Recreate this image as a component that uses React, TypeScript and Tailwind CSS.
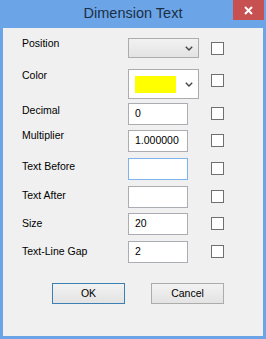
import React from "react";

type Row = {
  label: string;
  labelClass: string;
  rowClass: string;
  value?: string;
  focused?: boolean;
};

const rows: Row[] = [
  { label: "Decimal", labelClass: "mt-[1px]", rowClass: "mt-[4px]", value: "0" },
  { label: "Multiplier", labelClass: "mt-[-1px]", rowClass: "mt-[5px]", value: "1.000000" },
  { label: "Text Before", labelClass: "mt-[2px]", rowClass: "mt-[6px]", focused: true },
  { label: "Text After", labelClass: "mt-[3px]", rowClass: "mt-[6px]" },
  { label: "Size", labelClass: "mt-[4px]", rowClass: "mt-[5px]", value: "20" },
  { label: "Text-Line Gap", labelClass: "mt-[4px]", rowClass: "mt-[6px]", value: "2" },
];

function Chevron() {
  return (
    <svg width="8" height="5" viewBox="0 0 8 5" className="shrink-0">
      <polyline points="0.8,0.8 4,4 7.2,0.8" fill="none" stroke="#444" strokeWidth="1.4" />
    </svg>
  );
}

function Check({ className }: { className: string }) {
  return <div className={`w-[13px] h-[13px] border border-[#707070] bg-white ${className}`} />;
}

export default function App() {
  return (
    <div className="w-[266px] h-[339px] bg-[#6ba5e8] flex flex-col font-['Liberation_Sans',Arial,sans-serif] text-[10.5px] text-black">
      <div className="relative h-[28px] flex items-start justify-center pt-[4px]">
        <span className="text-[14.5px] leading-[18px] text-[#1c2f45]">Dimension Text</span>
        <div className="absolute top-0 right-[2px] w-[31px] h-[20px] bg-[#c75050] flex items-center justify-center">
          <svg width="9" height="9" viewBox="0 0 9 9">
            <path d="M1 1 L8 8 M8 1 L1 8" stroke="white" strokeWidth="2" />
          </svg>
        </div>
      </div>

      <div className="mx-[3px] h-[308px] bg-[#f0f0f0] flex flex-col pl-[19px] pt-[10px]">
        <div className="flex items-start">
          <div className="w-[106px] leading-[13px] mt-[-1px]">Position</div>
          <div className="w-[83px]">
            <div className="w-[71px] h-[20px] border border-[#acacac] bg-gradient-to-b from-[#f2f2f2] to-[#e3e3e3] flex items-center justify-end pr-[5px]">
              <Chevron />
            </div>
          </div>
          <Check className="mt-[4px]" />
        </div>

        <div className="flex items-start mt-[11px]">
          <div className="w-[106px] leading-[13px]">Color</div>
          <div className="w-[83px]">
            <div className="w-[71px] h-[30px] border border-[#acacac] bg-white flex items-center pl-[6px] pr-[5px]">
              <div className="w-[41px] h-[17px] bg-[#ffff00]" />
              <div className="flex-1" />
              <Chevron />
            </div>
          </div>
          <Check className="mt-[5px]" />
        </div>

        {rows.map((r) => (
          <div key={r.label} className={`flex items-start ${r.rowClass}`}>
            <div className={`w-[106px] leading-[13px] ${r.labelClass}`}>{r.label}</div>
            <div className="w-[83px]">
              <div
                className={`w-[60px] h-[22px] border bg-white flex items-center pl-[6px] ${
                  r.focused ? "border-[#7eb4ea]" : "border-[#abadb3]"
                }`}
              >
                {r.value}
              </div>
            </div>
            <Check className="mt-[4px]" />
          </div>
        ))}

        <div className="flex ml-[30px] mt-[20px] gap-[26px]">
          <button className="w-[73px] h-[21px] border border-[#3c7fb1] bg-gradient-to-b from-[#f2f2f2] to-[#e3e3e3] text-[10.5px]">
            OK
          </button>
          <button className="w-[73px] h-[21px] border border-[#acacac] bg-gradient-to-b from-[#f2f2f2] to-[#e3e3e3] text-[10.5px]">
            Cancel
          </button>
        </div>
      </div>
    </div>
  );
}
